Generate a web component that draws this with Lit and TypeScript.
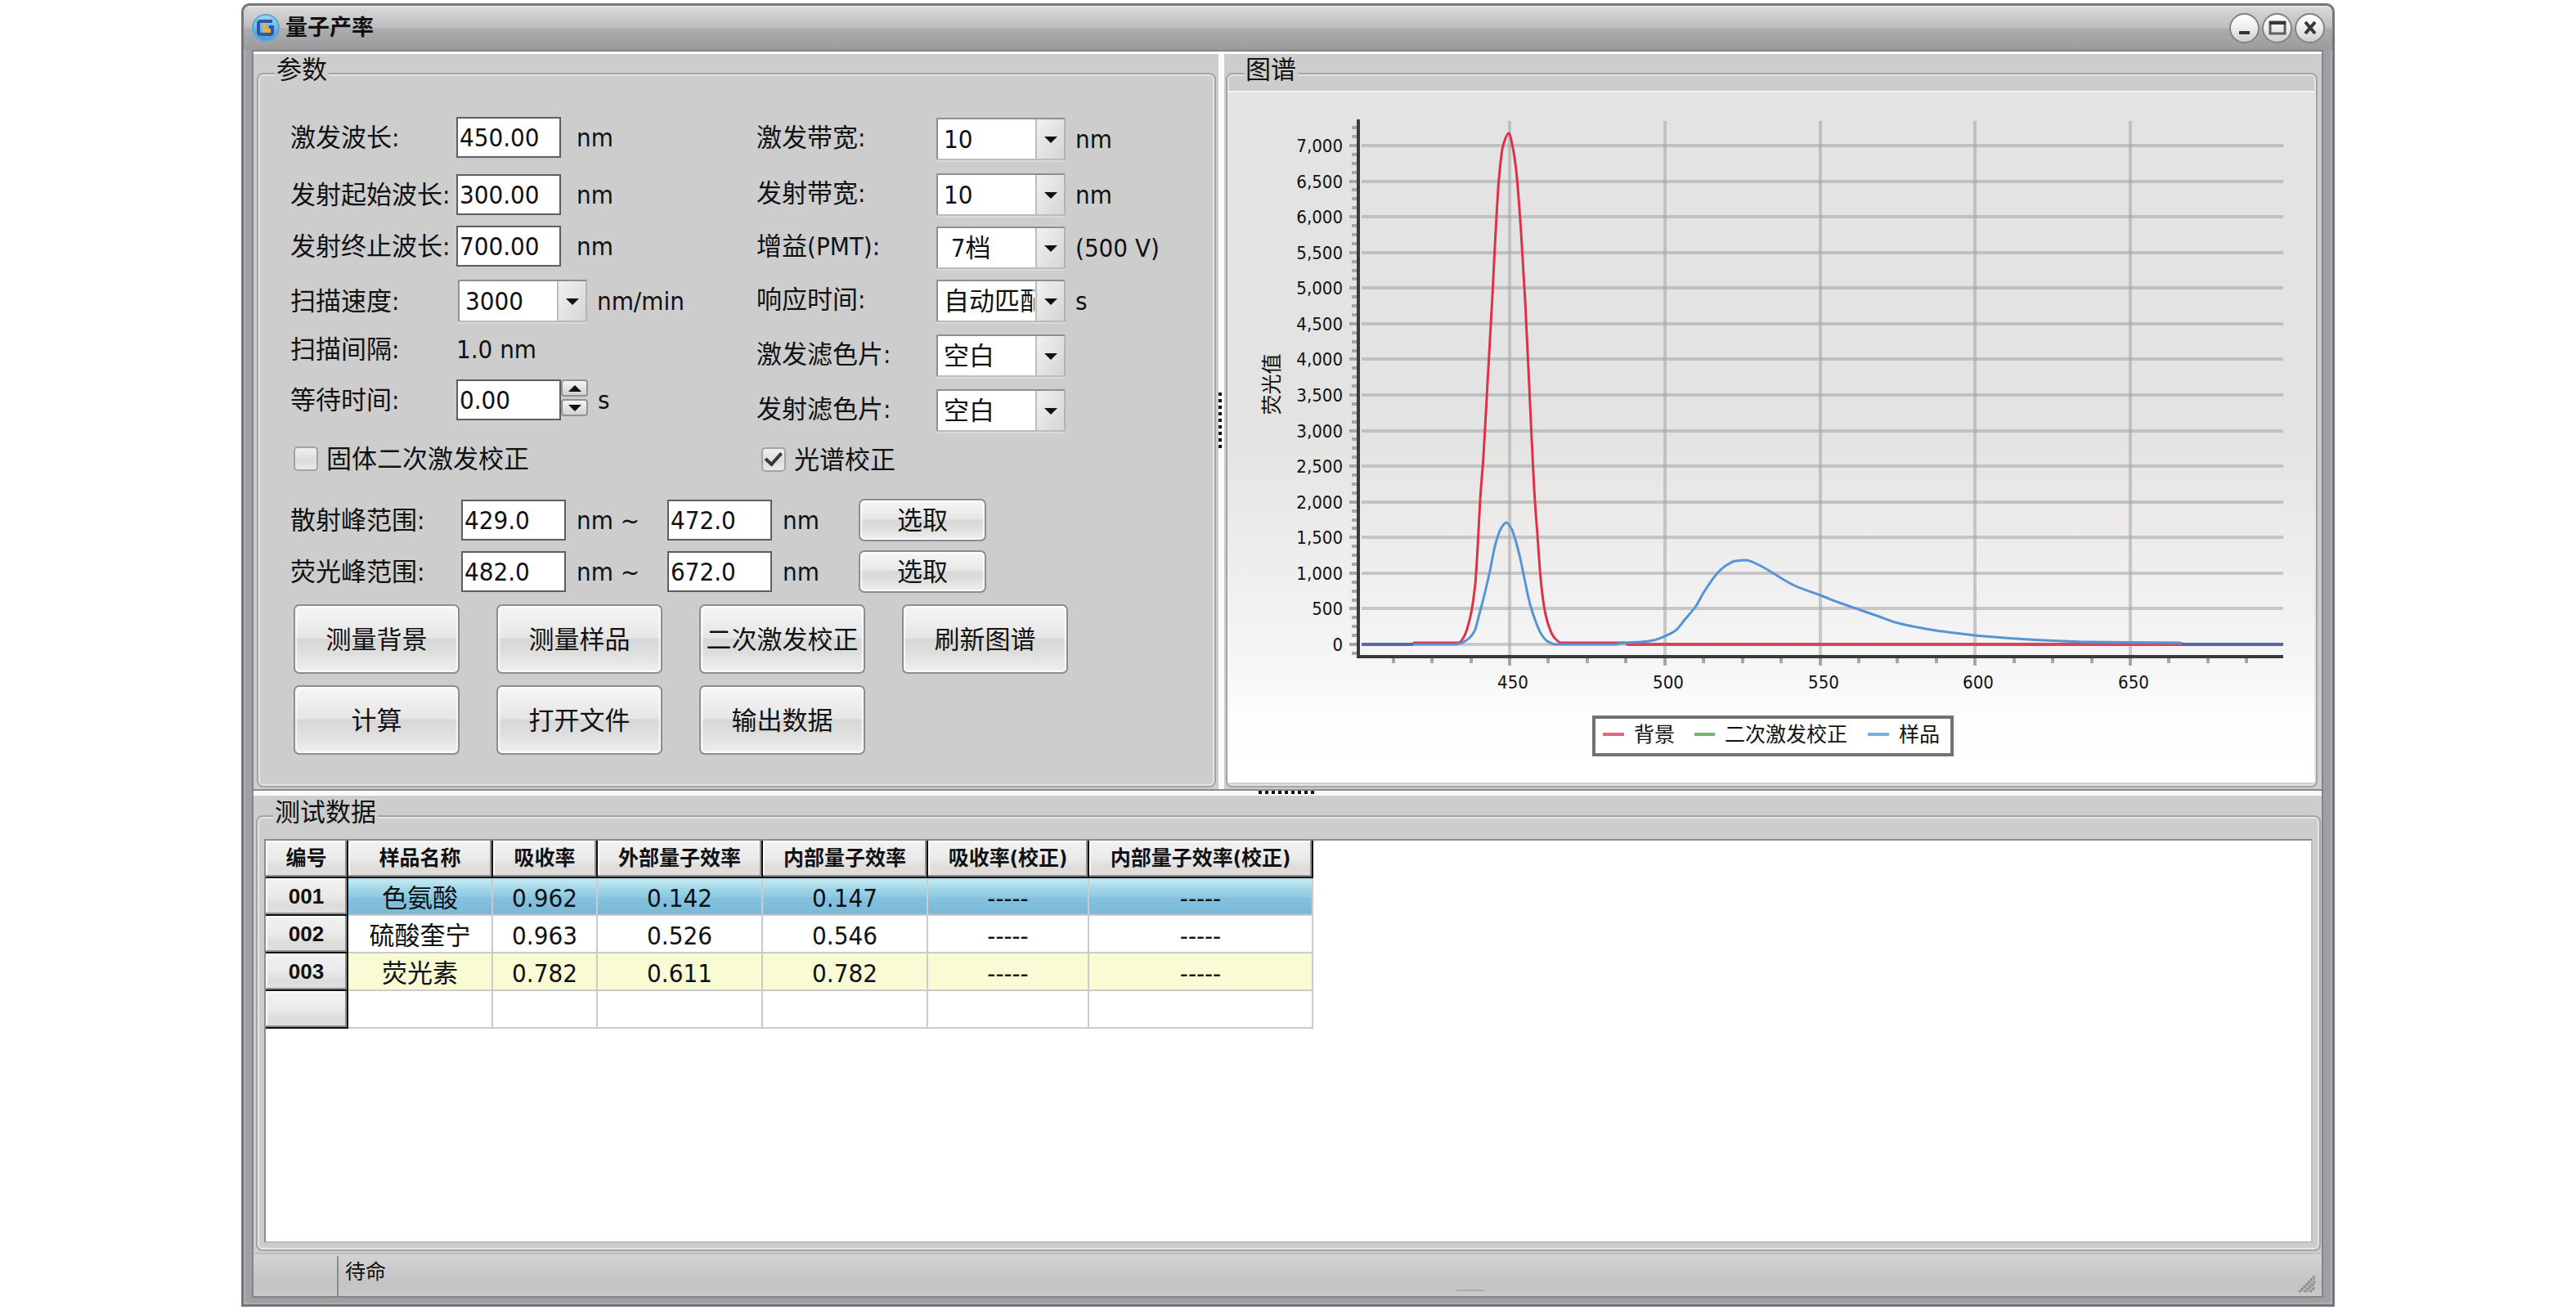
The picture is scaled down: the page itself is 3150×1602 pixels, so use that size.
import { LitElement, html, svg, css } from "lit";
import { customElement } from "lit/decorators.js";
import { classMap } from "lit/directives/class-map.js";

type Point = [number, number];

const FONT = css`"DejaVu Sans Condensed", "Noto Sans CJK SC", sans-serif`;

/* Fluorescence spectrum: axes, grid, three series and their legend. */
@customElement("spectrum-chart")
class SpectrumChart extends LitElement {
  static styles = css`
    :host {
      display: flex;
      min-width: 0;
      min-height: 0;
      border-top: 2px solid #f4f4f4;
      background: linear-gradient(#e3e3e3 50%, #e8e6e4 55%, #f0f0f0 72%, #f6f6f6 83%, #fcfcfb 90%, #ffffff 98%);
    }
    .plot {
      display: block;
      width: 100%;
      height: 100%;
      font-family: ${FONT};
      fill: #111;
    }
    .grid { stroke: #a3a5a4; stroke-opacity: 0.55; stroke-width: 4; }
    .tick { stroke: #a6a6a8; stroke-width: 4; }
    .axis { fill: #3a3a3e; }
    .tick-text { font-size: 22px; }
    .y-text { text-anchor: end; }
    .x-text { text-anchor: middle; }
    .title-text { font-size: 25px; text-anchor: middle; }
    .legend-text { font-size: 25px; }
    .legend-box { fill: #fff; stroke: #6f7379; stroke-width: 4; }
    .series { fill: none; stroke-width: 3; stroke-linejoin: round; }
    .red { stroke: #df3048; }
    .blue { stroke: #5595d6; }
    .overlap { stroke: #5c62ac; stroke-width: 4; }
    .base { stroke: #d6455c; stroke-width: 4; }
    .key { stroke-width: 4; }
    .key-red { stroke: #e0667a; }
    .key-green { stroke: #72b572; }
    .key-blue { stroke: #7aaedc; }
  `;

  private background: Point[] = [
    [1665, 787], [1727, 787], [1729, 785], [1784, 785], [1790, 778], [1798, 753], [1804, 713], [1807, 667],
    [1810, 610], [1814, 557], [1819, 467], [1825, 360], [1828, 300], [1833, 217], [1838, 177], [1845, 162],
    [1850, 180], [1854, 207], [1860, 283], [1865, 367], [1871, 493], [1876, 597], [1880, 653], [1884, 707],
    [1888, 740], [1893, 762], [1900, 778], [1909, 785], [1988, 785], [1990, 787], [2792, 787],
  ];

  private sample: Point[] = [
    [1665, 787], [1780, 787], [1790, 784], [1797, 779], [1803, 771], [1809, 750], [1816, 723], [1822, 697],
    [1828, 667], [1835, 646], [1842, 638], [1848, 645], [1853, 659], [1859, 682], [1864, 706], [1871, 738],
    [1879, 762], [1885, 775], [1892, 783], [1902, 787], [1975, 787], [1984, 785], [2007, 784], [2022, 782],
    [2036, 777], [2049, 770], [2060, 757], [2074, 740], [2083, 724], [2100, 700], [2110, 691], [2122, 685],
    [2135, 684], [2149, 689], [2178, 706], [2194, 715], [2226, 727], [2252, 737], [2275, 745], [2298, 753],
    [2321, 761], [2344, 766], [2367, 770], [2390, 773], [2426, 777], [2481, 781], [2523, 783], [2550, 784],
    [2665, 785], [2672, 787], [2792, 787],
  ];

  /* Smooth curve through the points; control points stay inside each x interval. */
  private curve(points: Point[]) {
    const slope = (i: number) => {
      if (i === 0 || i === points.length - 1) return 0;
      const [ax, ay] = points[i - 1];
      const [bx, by] = points[i];
      const [cx, cy] = points[i + 1];
      const left = (by - ay) / (bx - ax);
      const right = (cy - by) / (cx - bx);
      return left * right <= 0 ? 0 : (2 * left * right) / (left + right);
    };
    let d = `M${points[0][0]} ${points[0][1]}`;
    for (let i = 1; i < points.length; i++) {
      const [ax, ay] = points[i - 1];
      const [bx, by] = points[i];
      const h = (bx - ax) / 3;
      d += `C${ax + h} ${ay + h * slope(i - 1)} ${bx - h} ${by - h * slope(i)} ${bx} ${by}`;
    }
    return d;
  }

  render() {
    const yOf = (v: number) => Math.round(787 - (v * 610) / 7000);
    const xOf = (v: number) => Math.round(1846 + ((v - 450) * 759) / 200);
    const yMajor = Array.from({ length: 15 }, (_, i) => i * 500);
    const yMinor = Array.from({ length: 60 }, (_, i) => i * 125 - 125).filter((v) => v % 500 !== 0);
    const xMajor = [450, 500, 550, 600, 650];
    const xMinor = Array.from({ length: 23 }, (_, i) => 412.5 + i * 12.5).filter((v) => v % 50 !== 0 && v < 700);
    return html`
      <svg class="plot" viewBox="1501 112 1329 844" role="img" aria-label="图谱">
        ${yMajor.map((v) => svg`
          <line class="grid" x1="1665" x2="2792" y1=${yOf(v)} y2=${yOf(v)}></line>
          <line class="tick" x1="1650" x2="1659" y1=${yOf(v)} y2=${yOf(v)}></line>
          <text class="tick-text y-text" x="1642" y=${yOf(v) + 8}>${v.toLocaleString("en-US")}</text>`)}
        ${yMinor.map((v) => svg`<line class="tick" x1="1653" x2="1659" y1=${yOf(v)} y2=${yOf(v)}></line>`)}
        ${xMajor.map((v) => svg`
          <line class="grid" x1=${xOf(v)} x2=${xOf(v)} y1="147" y2="800"></line>
          <line class="tick" x1=${xOf(v)} x2=${xOf(v)} y1="804" y2="813"></line>
          <text class="tick-text x-text" x=${xOf(v) + 4} y="841">${v}</text>`)}
        ${xMinor.map((v) => svg`<line class="tick" x1=${xOf(v)} x2=${xOf(v)} y1="804" y2="810"></line>`)}
        <rect class="axis" x="1659" y="145" width="4" height="659"></rect>
        <rect class="axis" x="1663" y="800" width="1129" height="4"></rect>
        <text class="title-text" transform="translate(1564 469) rotate(-90)">荧光值</text>

        <path class="series red" d=${this.curve(this.background)}></path>
        <line class="base" x1="1990" x2="2668" y1="787" y2="787"></line>
        <path class="series blue" d=${this.curve(this.sample)}></path>
        <line class="overlap" x1="1665" x2="1728" y1="787" y2="787"></line>
        <line class="overlap" x1="2668" x2="2792" y1="787" y2="787"></line>

        <rect class="legend-box" x="1949" y="876" width="438" height="46"></rect>
        <line class="key key-red" x1="1960" x2="1986" y1="897" y2="897"></line>
        <text class="legend-text" x="1998" y="906">背景</text>
        <line class="key key-green" x1="2072" x2="2097" y1="897" y2="897"></line>
        <text class="legend-text" x="2109" y="906">二次激发校正</text>
        <line class="key key-blue" x1="2284" x2="2310" y1="897" y2="897"></line>
        <text class="legend-text" x="2322" y="906">样品</text>
      </svg>
    `;
  }
}

/* Drop-down with a separate arrow cell. */
const picker = (id: string, value: string) => html`
  <span class="picker">
    <select id=${id} class="picker-select"><option>${value}</option></select>
  </span>
`;

@customElement("app-root")
class AppRoot extends LitElement {
  static styles = css`
    :host {
      display: block;
      font-family: ${FONT};
      font-size: 31px;
      line-height: 32px;
      color: #111;
      background: #fff;
    }
    * { box-sizing: border-box; }
    button, input, select { font: inherit; color: inherit; margin: 0; }
    .page { display: flex; min-height: 100vh; padding: 4px 295px; }
    .window {
      flex: 1;
      min-width: 0;
      display: flex;
      flex-direction: column;
      border: 3px solid #73767b;
      border-radius: 10px 10px 0 0;
      background: #a0a0a2;
      box-shadow: inset 2px 0 #adaeb0, inset -2px 0 #adaeb0, inset 0 -2px #adaeb0;
    }
    .titlebar {
      display: flex;
      align-items: center;
      height: 54px;
      padding: 0 9px 0 10px;
      border-radius: 8px 8px 0 0;
      background: linear-gradient(#e6e6e6 0, #d6d6d6 4px, #bcbdbf 27px, #aeaeb0 27px, #9b9b9e 54px);
    }
    .logo { width: 34px; height: 34px; }
    .title { flex: 1; margin: 0 0 0 7px; font-size: 27px; font-weight: 700; }
    .window-buttons { display: flex; gap: 3px; }
    .round {
      width: 37px;
      height: 37px;
      padding: 0;
      border: 2px solid #828287;
      border-radius: 50%;
      background: linear-gradient(#ffffff, #ededec 50%, #cfcfcf);
      display: grid;
      place-items: center;
    }
    .glyph { width: 22px; height: 22px; }

    .client {
      flex: 1;
      display: flex;
      flex-direction: column;
      margin: 0 11px 8px 10px;
      border: 2px solid #83848b;
      background: #cdcdcd;
    }
    .upper {
      display: grid;
      grid-template-columns: minmax(0, 1180fr) 7px minmax(0, 1342fr);
      border-top: 3px solid #fff;
    }
    .pane { display: flex; }
    .pane-params { padding: 3px 3px 2px 4px; }
    .pane-chart { padding: 3px 5px 2px 2px; }
    .pane-data { flex: 1; padding: 4px 1px 2px 3px; }
    .split-v { display: flex; align-items: center; background: #fafafa; }
    .dots-v {
      width: 4px;
      height: 72px;
      background: repeating-linear-gradient(#111 0 4px, transparent 4px 8px);
    }
    .split-h {
      display: flex;
      justify-content: center;
      height: 8px;
      border-top: 2px solid #8a8a90;
      background: #fafafa;
    }
    .dots-h {
      width: 72px;
      height: 4px;
      background: repeating-linear-gradient(90deg, #111 0 4px, transparent 4px 8px);
    }
    .group {
      flex: 1;
      min-width: 0;
      margin: 0;
      padding: 0;
      border: 2px solid #a5a5a6;
      border-radius: 8px;
      box-shadow: inset 0 0 0 2px #e4e4e4;
      display: flex;
      flex-direction: column;
    }
    .legend { margin-left: 20px; padding: 0 2px 10px; background: #cdcdcd; }
    .legend-data { margin-left: 11px; }
    .group-chart { padding: 0 2px 4px 0; }
    .group-data { padding: 7px 8px 8px; }
    .chart { flex: 1; }

    .params { padding: 23px 0 37px 39px; }
    .columns { display: grid; grid-template-columns: 570px 1fr; }
    .column { display: grid; }
    .column-left { grid-template-rows: 68px 72px 54px 80px 38px 86px 58px; }
    .column-right { grid-template-rows: 72px 64px 66px 64px 70px 64px 56px; }
    .row { display: flex; align-items: center; white-space: nowrap; }
    .name-left { width: 203px; }
    .name-right { width: 220px; padding-bottom: 4px; }
    .name-range { width: 209px; }
    .box {
      width: 128px;
      height: 50px;
      padding: 0 2px;
      border: 2px solid #5d5e64;
      border-radius: 0;
      background: #fff;
      outline: none;
    }
    .unit { margin-left: 19px; }
    .unit-near { margin-left: 12px; }
    .unit-range { width: 124px; padding-left: 13px; }
    .unit-end { width: 106px; padding-left: 13px; }
    .inset { margin-left: 2px; }
    .picker { position: relative; display: flex; }
    .picker-select {
      appearance: none;
      width: 158px;
      height: 52px;
      padding: 0 36px 0 7px;
      border: 2px solid #a0a0a4;
      border-color: #8e8e93 #b4b4b4 #bcbcbc #8e8e93;
      border-radius: 2px;
      background:
        linear-gradient(#bdbdbd, #bdbdbd) right 33px top 0 / 2px 100% no-repeat,
        linear-gradient(120deg, #f2f1f1, #d6d5d4) right / 33px 100% no-repeat,
        #fff;
      box-shadow: 0 2px #dadada;
    }
    .picker::after {
      content: "";
      position: absolute;
      right: 10px;
      top: 23px;
      border: 8px solid transparent;
      border-top: 8px solid #111;
      border-bottom: 0;
      pointer-events: none;
    }
    .spin { display: grid; gap: 3px; align-self: center; width: 33px; height: 50px; align-content: start; }
    .spin-button {
      height: 21px;
      padding: 0;
      border: 2px solid #909095;
      border-radius: 4px;
      background: linear-gradient(#f4f4f4, #d2d2d2);
      display: grid;
      place-items: center;
    }
    .spin-glyph { width: 16px; height: 8px; }
    .check { display: flex; align-items: center; gap: 10px; }
    .check-left { padding-left: 4px; }
    .check-right { padding-left: 6px; }
    .check-box {
      appearance: none;
      width: 30px;
      height: 30px;
      border: 2px solid #a2a2a4;
      border-radius: 5px;
      background: linear-gradient(#f1f0f0, #dcdbda 60%, #ebebea);
      display: grid;
      place-items: center;
    }
    .check-box:checked::before {
      content: "";
      width: 8px;
      height: 16px;
      border: solid #35373d;
      border-width: 0 4px 4px 0;
      transform: rotate(42deg) translate(-2px, -2px);
    }
    .ranges { padding-top: 14px; }
    .range { height: 63px; }
    .button {
      padding: 0;
      border: 2px solid #8c8d93;
      border-radius: 7px;
      background: linear-gradient(#f6f6f6, #e6e6e6 48%, #d7d7d7 50%, #dededd 70%, #f0efee);
      box-shadow: inset 0 0 2px 2px rgba(255, 255, 255, 0.8);
      white-space: nowrap;
    }
    .button-small { width: 156px; height: 52px; }
    .actions {
      display: grid;
      grid-template-columns: repeat(4, 203px);
      grid-auto-rows: 85px;
      gap: 14px 45px;
      padding: 9px 0 0 4px;
    }

    .sheet {
      flex: 1;
      min-width: 0;
      border: 2px solid #8d8d90;
      border-right-color: #bdbdbd;
      border-bottom-color: #bdbdbd;
      background: #fff;
    }
    .table { border-collapse: separate; border-spacing: 0; table-layout: fixed; width: 1281px; }
    .c0 { width: 101px; }
    .c1 { width: 177px; }
    .c2 { width: 128px; }
    .c3 { width: 202px; }
    .c4 { width: 202px; }
    .c5 { width: 197px; }
    .c6 { width: 274px; }
    .head {
      height: 46px;
      padding: 0;
      font-size: 25px;
      font-weight: 700;
      border-right: 2px solid #111;
      border-bottom: 2px solid #111;
      background: linear-gradient(#f2f2f2, #eaeaea 50%, #dddcdb 75%, #e0dfde);
      box-shadow: inset -2px -2px #8f8f92, inset 2px 2px #fafafa;
      white-space: nowrap;
    }
    .head-row { font-family: "Liberation Sans", sans-serif; font-size: 26px; }
    .cell {
      height: 46px;
      padding: 4px 0 0;
      text-align: center;
      border-right: 2px solid #cbcbcb;
      border-bottom: 2px solid #cbcbcb;
    }
    .selected { background: linear-gradient(#b2dbe9, #c0e7f1 8%, #9fd6e8 30%, #8fc9e1 52%, #86c1dd 54%, #79b9db); }
    .striped { background: #f8fbd3; }

    .status {
      display: flex;
      height: 53px;
      border-top: 2px solid #c0c0c0;
      background: linear-gradient(#d4d4d4, #c9cac9 40%, #c4c4c4 70%, #c9c9c9);
      font-size: 25px;
    }
    .status-cell { width: 104px; margin-top: 2px; border-right: 2px solid #8b8b8e; }
    .status-text { flex: 1; padding: 6px 0 0 8px; }
    .status-mark { align-self: flex-end; width: 34px; height: 2px; margin-bottom: 6px; background: #aaaaac; }
    .status-end { flex: 1; max-width: 1024px; display: flex; justify-content: flex-end; align-items: flex-end; padding: 0 7px 4px 0; }
    .grip { width: 22px; height: 22px; }
  `;

  private leftFields = [
    { id: "ex", label: "激发波长:", value: "450.00" },
    { id: "em-start", label: "发射起始波长:", value: "300.00" },
    { id: "em-end", label: "发射终止波长:", value: "700.00" },
  ];

  private rightFields = [
    { id: "ex-band", label: "激发带宽:", value: "10", unit: "nm" },
    { id: "em-band", label: "发射带宽:", value: "10", unit: "nm" },
    { id: "gain", label: "增益(PMT):", value: "\u00a07档", unit: "(500 V)" },
    { id: "response", label: "响应时间:", value: "自动匹配", unit: "s" },
    { id: "ex-filter", label: "激发滤色片:", value: "空白", unit: "" },
    { id: "em-filter", label: "发射滤色片:", value: "空白", unit: "" },
  ];

  private ranges = [
    { id: "scatter", label: "散射峰范围:", from: "429.0", to: "472.0" },
    { id: "fluor", label: "荧光峰范围:", from: "482.0", to: "672.0" },
  ];

  private actions = ["测量背景", "测量样品", "二次激发校正", "刷新图谱", "计算", "打开文件", "输出数据"];

  private columns = ["编号", "样品名称", "吸收率", "外部量子效率", "内部量子效率", "吸收率(校正)", "内部量子效率(校正)"];

  private rows = [
    ["001", "色氨酸", "0.962", "0.142", "0.147", "-----", "-----"],
    ["002", "硫酸奎宁", "0.963", "0.526", "0.546", "-----", "-----"],
    ["003", "荧光素", "0.782", "0.611", "0.782", "-----", "-----"],
    ["", "", "", "", "", "", ""],
  ];

  private renderTitle() {
    return html`
      <header class="titlebar">
        <svg class="logo" viewBox="0 0 34 34" aria-hidden="true">
          <defs>
            <linearGradient id="orb" x1="0" y1="0" x2="0" y2="1">
              <stop offset="0" stop-color="#9bdaf0"></stop>
              <stop offset="1" stop-color="#3a9cd6"></stop>
            </linearGradient>
          </defs>
          <circle cx="17" cy="17" r="16" fill="url(#orb)" stroke="#5aa9d2" stroke-width="2"></circle>
          <path d="M25 9H11q-3 0-3 3v10q0 3 3 3h11q3 0 3-3v-6h-4" fill="none" stroke="#3355a8" stroke-width="4"></path>
          <path d="M13 11h4v7h6v5H13z" fill="#edb03c"></path>
        </svg>
        <h1 class="title">量子产率</h1>
        <div class="window-buttons">
          <button class="round" aria-label="最小化">
            <svg class="glyph" viewBox="0 0 22 22"><path d="M4 17h13" stroke="#35373d" stroke-width="4"></path></svg>
          </button>
          <button class="round" aria-label="最大化">
            <svg class="glyph" viewBox="0 0 22 22">
              <rect x="2" y="4" width="18" height="14" fill="none" stroke="#5a5d63" stroke-width="3"></rect>
              <path d="M1 5h20" stroke="#35373d" stroke-width="4"></path>
            </svg>
          </button>
          <button class="round" aria-label="关闭">
            <svg class="glyph" viewBox="0 0 22 22"><path d="M5 4l12 14M17 4L5 18" stroke="#35373d" stroke-width="4"></path></svg>
          </button>
        </div>
      </header>
    `;
  }

  private renderParams() {
    return html`
      <fieldset class="group">
        <legend class="legend">参数</legend>
        <div class="params">
          <div class="columns">
            <div class="column column-left">
              ${this.leftFields.map((f) => html`
                <div class="row">
                  <label class="name-left" for=${f.id}>${f.label}</label>
                  <input class="box" id=${f.id} .value=${f.value} />
                  <span class="unit">nm</span>
                </div>`)}
              <div class="row">
                <label class="name-left" for="speed">扫描速度:</label>
                <span class="inset">${picker("speed", "3000")}</span>
                <span class="unit-near">nm/min</span>
              </div>
              <div class="row"><span class="name-left">扫描间隔:</span><span>1.0 nm</span></div>
              <div class="row">
                <label class="name-left" for="wait">等待时间:</label>
                <input class="box" id="wait" .value=${"0.00"} />
                <span class="spin">
                  <button class="spin-button" aria-label="增加">
                    <svg class="spin-glyph" viewBox="0 0 16 8"><path d="M0 8L8 0L16 8z" fill="#111"></path></svg>
                  </button>
                  <button class="spin-button" aria-label="减少">
                    <svg class="spin-glyph" viewBox="0 0 16 8"><path d="M0 0L8 8L16 0z" fill="#111"></path></svg>
                  </button>
                </span>
                <span class="unit-near">s</span>
              </div>
              <label class="check check-left"><input class="check-box" type="checkbox" />固体二次激发校正</label>
            </div>
            <div class="column column-right">
              ${this.rightFields.map((f) => html`
                <div class="row">
                  <label class="name-right" for=${f.id}>${f.label}</label>
                  ${picker(f.id, f.value)}
                  <span class="unit-near">${f.unit}</span>
                </div>`)}
              <label class="check check-right"><input class="check-box" type="checkbox" checked />光谱校正</label>
            </div>
          </div>
          <div class="ranges">
            ${this.ranges.map((r) => html`
              <div class="row range">
                <label class="name-range" for="${r.id}-from">${r.label}</label>
                <input class="box" id="${r.id}-from" .value=${r.from} />
                <label class="unit-range" for="${r.id}-to">nm ~</label>
                <input class="box" id="${r.id}-to" .value=${r.to} />
                <span class="unit-end">nm</span>
                <button class="button button-small">选取</button>
              </div>`)}
          </div>
          <div class="actions">
            ${this.actions.map((a) => html`<button class="button">${a}</button>`)}
          </div>
        </div>
      </fieldset>
    `;
  }

  private renderTable() {
    return html`
      <table class="table">
        <colgroup>${this.columns.map((_, i) => html`<col class="c${i}" />`)}</colgroup>
        <thead>
          <tr>${this.columns.map((c) => html`<th class="head" scope="col">${c}</th>`)}</tr>
        </thead>
        <tbody>
          ${this.rows.map((r, i) => html`
            <tr>
              <th class="head head-row" scope="row">${r[0]}</th>
              ${r.slice(1).map((c) => html`
                <td class=${classMap({ cell: true, selected: i === 0, striped: i === 2 })}>${c}</td>`)}
            </tr>`)}
        </tbody>
      </table>
    `;
  }

  render() {
    return html`
      <div class="page">
        <div class="window">
          ${this.renderTitle()}
          <main class="client">
            <div class="upper">
              <section class="pane pane-params">${this.renderParams()}</section>
              <div class="split-v"><div class="dots-v"></div></div>
              <section class="pane pane-chart">
                <fieldset class="group group-chart">
                  <legend class="legend">图谱</legend>
                  <spectrum-chart class="chart"></spectrum-chart>
                </fieldset>
              </section>
            </div>
            <div class="split-h"><div class="dots-h"></div></div>
            <section class="pane pane-data">
              <fieldset class="group group-data">
                <legend class="legend legend-data">测试数据</legend>
                <div class="sheet">${this.renderTable()}</div>
              </fieldset>
            </section>
            <footer class="status">
              <div class="status-cell"></div>
              <div class="status-text">待命</div>
              <div class="status-mark"></div>
              <div class="status-end">
                <svg class="grip" viewBox="0 0 22 22" aria-hidden="true">
                  <path d="M1 21L21 1M8 21L21 8M15 21L21 15" stroke="#7d7e83" stroke-width="2" stroke-dasharray="3 1"></path>
                  <path d="M4 21L21 4M11 21L21 11" stroke="#a5a6a9" stroke-width="2"></path>
                </svg>
              </div>
            </footer>
          </main>
        </div>
      </div>
    `;
  }
}
